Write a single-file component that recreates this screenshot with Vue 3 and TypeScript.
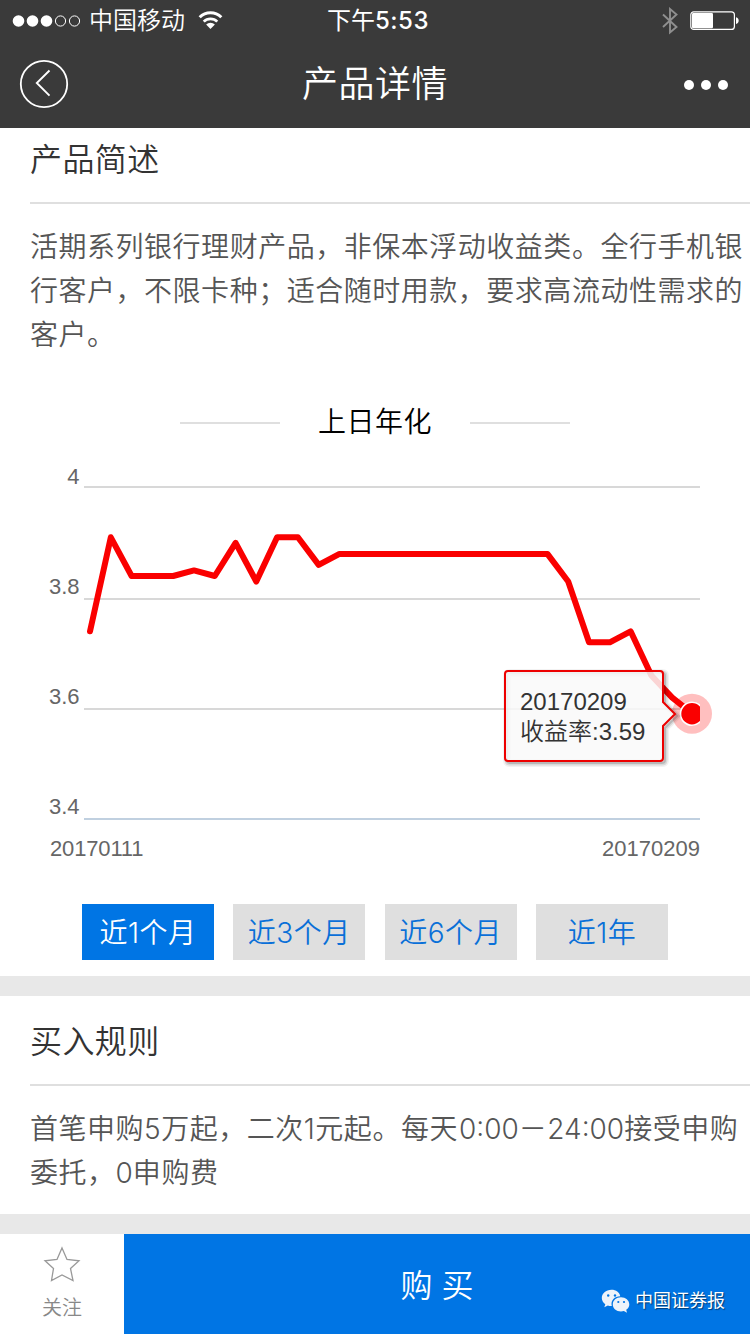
<script setup lang="ts">
import { ref } from 'vue'

const values: number[] = [
  3.74, 3.91, 3.84, 3.84, 3.84, 3.85, 3.84, 3.9, 3.83, 3.91, 3.91, 3.86,
  3.88, 3.88, 3.88, 3.88, 3.88, 3.88, 3.88, 3.88, 3.88, 3.88, 3.88,
  3.83, 3.72, 3.72, 3.74, 3.66, 3.62, 3.59,
]

const xOf = (i: number): number => 90 + (i * 603) / (values.length - 1)
const yOf = (v: number): number => 369.3 - (v - 3.4) * 553
const linePoints: string = values.map((v, i) => `${xOf(i).toFixed(1)},${yOf(v).toFixed(1)}`).join(' ')

const axis = [
  { label: '4', y: 37, text: 34, color: '#d8d8d8' },
  { label: '3.8', y: 149, text: 144, color: '#d8d8d8' },
  { label: '3.6', y: 259, text: 254, color: '#d8d8d8' },
  { label: '3.4', y: 369, text: 364, color: '#c0d0e0' },
]

const bubble = 'M508 221H660Q663 221 663 224V252L675 264 663 276V308Q663 311 660 311H508Q505 311 505 308V224Q505 221 508 221Z'
const shadows = [
  { width: 8, opacity: 0.05 },
  { width: 5, opacity: 0.1 },
  { width: 2, opacity: 0.15 },
]

const ranges: string[] = ['近1个月', '近3个月', '近6个月', '近1年']
const active = ref<number>(0)
</script>

<template>
  <div class="page">
    <header class="top">
      <div class="status">
        <div class="status-left">
          <svg class="signal" width="70" height="14" viewBox="0 0 70 14">
            <circle cx="6.5" cy="7" r="5.8" fill="#fff" />
            <circle cx="20.5" cy="7" r="5.8" fill="#fff" />
            <circle cx="34.5" cy="7" r="5.8" fill="#fff" />
            <circle cx="48.5" cy="7" r="5.1" fill="none" stroke="#fff" stroke-width="1" />
            <circle cx="62.5" cy="7" r="5.1" fill="none" stroke="#fff" stroke-width="1" />
          </svg>
          <span class="carrier">中国移动</span>
          <svg class="wifi" width="25" height="19" viewBox="0 0 26 20">
            <path d="M1.6 6.6a16.2 16.2 0 0 1 22.8 0" fill="none" stroke="#fff" stroke-width="3.2" />
            <path d="M5.9 11.2a10 10 0 0 1 14.2 0" fill="none" stroke="#fff" stroke-width="2.9" />
            <path d="M13 19l-4.6-4.7a6.5 6.5 0 0 1 9.2 0z" fill="#fff" />
          </svg>
        </div>
        <div class="clock">下午<span>5:53</span></div>
        <div class="status-right">
          <svg width="16" height="28" viewBox="0 0 16 28">
            <path d="M1 7.5L14.5 20 8 25.5V2l6.5 5.5L1 20" fill="none" stroke="#8f8f8f" stroke-width="1.9" />
          </svg>
          <svg class="battery" width="50" height="20" viewBox="0 0 50 20">
            <rect x=".8" y=".8" width="43.6" height="17.6" rx="3" fill="none" stroke="#fff" stroke-width="1.2" />
            <rect x="2" y="2" width="21" height="15.2" rx="1.2" fill="#fff" />
            <path d="M46 6.2c3.600 1 3.600 5.800 0 6.800z" fill="#fff" />
          </svg>
        </div>
      </div>
      <nav class="nav">
        <svg width="50" height="50" viewBox="0 0 50 50">
          <circle cx="25" cy="25" r="23.200" fill="none" stroke="#fff" stroke-width="1.800" />
          <path d="M30.500 11.500L17.800 24 30.500 36.700" fill="none" stroke="#fff" stroke-width="1.900" />
        </svg>
        <h1>产品详情</h1>
        <div class="more"><i /><i /><i /></div>
      </nav>
    </header>

    <section class="intro">
      <h2>产品简述</h2>
      <p class="body">活期系列银行理财产品，非保本浮动收益类。全行手机银<br>行客户，不限卡种；适合随时用款，要求高流动性需求的<br>客户。</p>
      <div class="chart-title"><i /><span>上日年化</span><i /></div>
      <svg class="chart" width="750" height="440" viewBox="0 0 750 440">
        <defs>
          <clipPath id="plot"><rect x="84" y="0" width="616" height="370" /></clipPath>
        </defs>
        <g v-for="a in axis" :key="a.label">
          <line x1="84" x2="700" :y1="a.y" :y2="a.y" :stroke="a.color" stroke-width="2" />
          <text x="79.500" :y="a.text" class="tick" text-anchor="end">{{ a.label }}</text>
        </g>
        <text x="50" y="406" class="tick" textLength="93.500">20170111</text>
        <text x="700" y="406" class="tick" text-anchor="end">20170209</text>
        <polyline :points="linePoints" fill="none" stroke="#fa0000" stroke-width="6" stroke-linejoin="round" stroke-linecap="round" />
        <circle cx="692" cy="263.700" r="20" fill="#ff0000" fill-opacity=".25" />
        <circle cx="692" cy="263.700" r="11.500" fill="#fa0000" stroke="#fff" stroke-width="1.600" clip-path="url(#plot)" />
        <path
          v-for="s in shadows" :key="s.width" :d="bubble" transform="translate(2 2)"
          fill="none" stroke="#000" :stroke-width="s.width" :stroke-opacity="s.opacity"
        />
        <path :d="bubble" fill="#f9f9f9" fill-opacity=".85" stroke="#ed0000" stroke-width="2" />
        <text x="520" y="260" class="tip">20170209</text>
        <text x="520" y="290" class="tip">收益率:3.59</text>
      </svg>
      <div class="ranges">
        <button v-for="(r, i) in ranges" :key="r" :class="{ on: i === active }" @click="active = i">{{ r }}</button>
      </div>
    </section>

    <section class="rules">
      <h2>买入规则</h2>
      <p class="body">首笔申购5万起，二次1元起。每天<span class="num first">0:00</span>－<span class="num">24:00</span>接受申购<br>委托，<span class="num">0</span>申购费</p>
    </section>

    <footer class="bottom">
      <div class="follow">
        <svg width="38" height="38" viewBox="0 0 38 38">
          <path d="M19 2L24 13.500 36 14.800 27.500 22.500 30 34.500 19 29 8.500 34.500 10.500 22.500 2 14.800 14 13.500Z" fill="none" stroke="#999" stroke-width="1.300" />
        </svg>
        <span>关注</span>
      </div>
      <div class="buy">
        购 买
        <div class="source">
          <svg width="29" height="25" viewBox="0 0 29 25">
            <path d="M10.500 .8C4.800 .8 .8 4.500 .8 9c0 2.600 1.400 4.700 3.500 6.200l-1 3 3.600-1.800c1.200.4 2.400.6 3.900.5C9.400 11.300 13.600 7.200 19.300 7.200 18.500 3.300 15 .8 10.500 .8Z" fill="#edf3fa" />
            <path d="M20 8.300c-4.700 0-8.200 3.200-8.200 7.100s3.500 7 8.200 7c1 0 2-.2 2.900-.5l3.100 1.800-.8-2.900c1.900-1.300 3.100-3.200 3.100-5.400 0-3.900-3.700-7.100-8.300-7.100Z" fill="#edf3fa" />
            <circle cx="7.200" cy="6.500" r="1.200" fill="#0075e4" />
            <circle cx="14" cy="6.500" r="1.200" fill="#0075e4" />
            <circle cx="17.300" cy="13" r="1.100" fill="#0075e4" />
            <circle cx="23" cy="13" r="1.100" fill="#0075e4" />
          </svg>
          <span>中国证券报</span>
        </div>
      </div>
    </footer>
  </div>
</template>

<style>
body {
  margin: 0;
  background: #e8e8e8;
}
</style>

<style scoped>
.page {
  width: 750px;
  height: 1334px;
  overflow: hidden;
  background: #e8e8e8;
  font-family: Inter, "Noto Sans CJK SC", sans-serif;
  font-weight: 350;
  display: flex;
  flex-direction: column;
}
.top {
  height: 128px;
  background: #3a3a3a;
  color: #fff;
}
.status {
  height: 40px;
  display: grid;
  grid-template-columns: 1fr auto 1fr;
  grid-template-rows: 41px;
  align-items: center;
}
.status-left {
  display: flex;
  align-items: center;
  padding-left: 12px;
}
.carrier {
  font-size: 24px;
  line-height: 40px;
  margin-left: 7px;
  padding-top: 1px;
}
.wifi { margin-left: 13px; }
.clock {
  font-size: 24px;
  line-height: 40px;
  font-weight: 400;
  padding: 1px 0 0 6px;
}
.clock span {
  font-size: 24px;
  font-weight: 500;
  letter-spacing: 0.5px;
}
.status-right {
  display: flex;
  justify-content: flex-end;
  align-items: center;
  gap: 12px;
  padding: 1px 10px 0 0;
}
.nav {
  height: 88px;
  display: grid;
  grid-template-columns: 200px 1fr 200px;
  grid-template-rows: 88px;
  align-items: center;
}
.nav > svg { margin-left: 19px; }
h1 {
  margin: 0;
  font-size: 36px;
  font-weight: 350;
  line-height: 88px;
  letter-spacing: 0.5px;
  text-align: center;
}
.more {
  display: flex;
  justify-content: flex-end;
  gap: 7px;
  padding: 2px 22px 0 0;
}
.more i {
  width: 10px;
  height: 10px;
  border-radius: 50%;
  background: #fff;
}
section { background: #fff; }
.intro { height: 848px; }
.rules {
  height: 218px;
  margin: 20px 0;
}
h2 {
  margin: 0 0 0 30px;
  height: 74px;
  line-height: 64px;
  border-bottom: 2px solid #dfdfdf;
  font-size: 32px;
  font-weight: 350;
  letter-spacing: 0.4px;
  color: #333;
}
.rules h2 {
  height: 88px;
  line-height: 92px;
}
.body {
  margin: 0 0 0 30px;
  padding-top: 21px;
  font-size: 28px;
  line-height: 44px;
  letter-spacing: 0.52px;
  white-space: nowrap;
  color: #555;
}
.num { letter-spacing: 0; }
.num.first { margin-left: 1px; }
.chart-title {
  margin-top: 44px;
  height: 44px;
  display: flex;
  justify-content: center;
  align-items: center;
  gap: 38px;
}
.chart-title i {
  width: 100px;
  height: 2px;
  background: #dfdfdf;
}
.chart-title span {
  font-size: 28px;
  line-height: 40px;
  padding-bottom: 2px;
  letter-spacing: 0.5px;
  color: #000;
}
.chart {
  display: block;
  margin-top: 5px;
}
.tick {
  font: 400 22px "Liberation Sans", sans-serif;
  fill: #666;
}
.tip {
  font: 350 24px "Liberation Sans", "Noto Sans CJK SC", sans-serif;
  fill: #333;
}
.ranges {
  display: flex;
  justify-content: space-between;
  margin-top: 14px;
  padding: 0 82px;
}
.ranges button {
  width: 132px;
  height: 56px;
  padding: 0 0 2px;
  border: 0;
  background: #dfdfdf;
  color: #0a70d8;
  font: inherit;
  font-size: 28px;
  letter-spacing: 0.5px;
}
.ranges button.on {
  background: #0075e4;
  color: #fff;
}
.bottom {
  height: 100px;
  display: flex;
  background: #fff;
}
.follow {
  width: 124px;
  display: flex;
  flex-direction: column;
  align-items: center;
  padding-top: 12px;
  box-sizing: border-box;
  color: #888;
  font-size: 20px;
  line-height: 30px;
}
.follow span { margin-top: 9px; }
.buy {
  position: relative;
  flex: 1;
  background: #0075e4;
  color: #fff;
  font-size: 32px;
  line-height: 104px;
  text-align: center;
}
.source {
  position: absolute;
  right: 25px;
  bottom: 19px;
  display: flex;
  align-items: center;
  gap: 5px;
  font-size: 18px;
  line-height: 28px;
  font-weight: 400;
  text-shadow: 1px 1px 1px rgba(0, 0, 0, 0.5);
}
</style>
